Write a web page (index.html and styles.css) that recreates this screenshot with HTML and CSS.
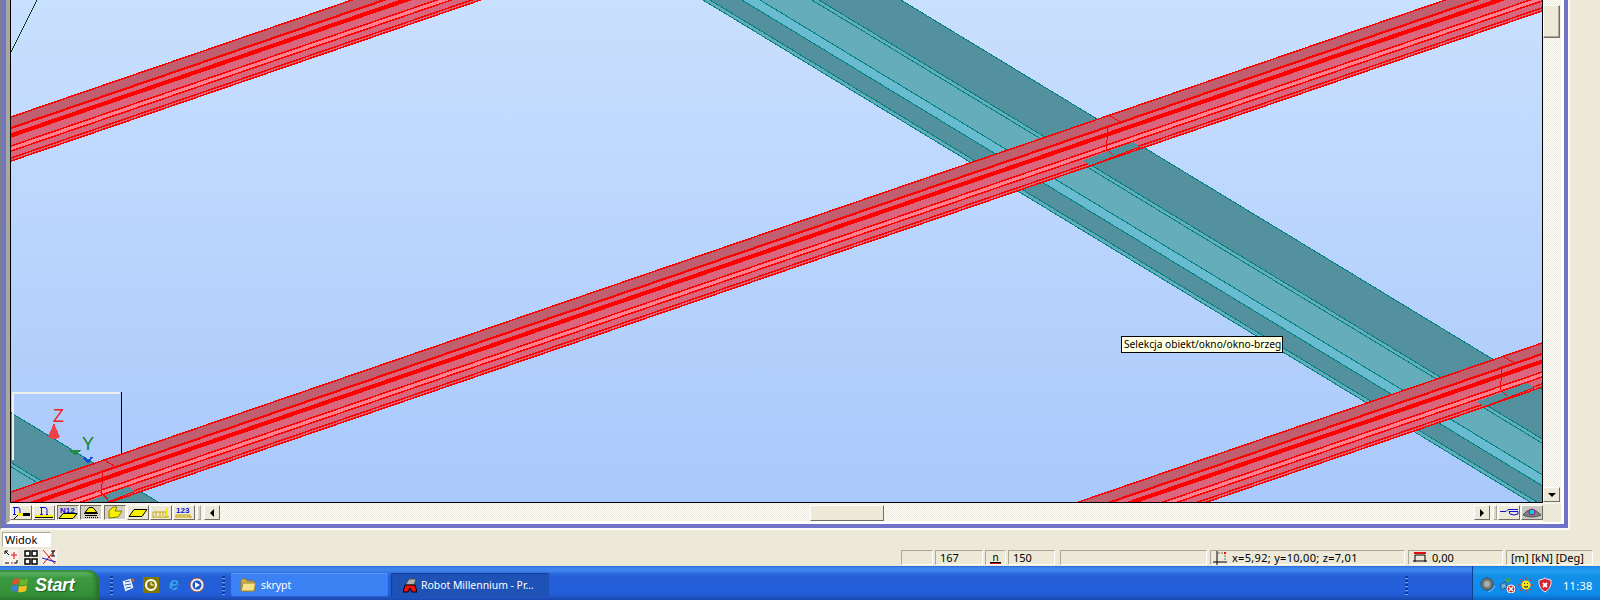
FILE: index.html
```html
<!DOCTYPE html>
<html lang="pl">
<head>
<meta charset="utf-8">
<title>Robot Millennium</title>
<link rel="stylesheet" href="styles.css">
</head>
<body>
<div class="screen">
  <div class="workspace">
    <div class="frame"><div class="mdi"><div class="pane">
      <div class="view-row">
        <div class="viewport">
          <svg class="scene" width="1531" height="502" viewBox="11 0 1531 502">
            <defs>
              <g id="teal">
                <path class="t-mid" d="M-297 -607 L2703 1214 H2710 L-290 -607 Z"/>
                <path class="t-dark" d="M-290 -607 L2710 1214 H2742 L-258 -607 Z"/>
                <path class="t-bright" d="M-258 -607 L2742 1214 H2760 L-240 -607 Z"/>
                <path class="t-mid" d="M-240 -607 L2760 1214 H2819 L-181 -607 Z"/>
                <path class="t-dark" d="M-181 -607 L2819 1214 H2901 L-99 -607 Z"/>
                <path class="t-line" d="M-297 -607 L2703 1214 M-290 -607 L2710 1214 M-258 -607 L2742 1214 M-240 -607 L2760 1214 M-188 -607 L2812 1214 M-181 -607 L2819 1214 M-99 -607 L2901 1214"/>
              </g>
              <g id="beam">
                <path class="b-dark" d="M-2000 686 L2000 -686 V-675 L-2000 697 Z"/>
                <path class="b-mid" d="M-2000 697 L2000 -675 V-657 L-2000 715 Z"/>
                <path class="b-light" d="M-2000 715 L2000 -657 V-652 L-2000 720 Z"/>
                <path class="b-mid" d="M-2000 720 L2000 -652 V-642 L-2000 730 Z"/>
                <path class="b-line" d="M-2000 686 L2000 -686 M-2000 715 L2000 -657 M-2000 720 L2000 -652 M-2000 727 L2000 -645 M-2000 730 L2000 -642"/>
                <path class="b-line2" d="M-2000 697 L2000 -675"/>
                <path class="b-line3" d="M-2000 704.5 L2000 -667.5"/>
              </g>
              <g id="joint">
                <path class="j-wedge" d="M-25 45 L-18 50 L32 31 L25 26 Z"/>
                <path class="j-line" d="M2 0 L12 6 M0 12 L-1 24 L-2 32 L5 39 M-18 50 L32 31"/>
              </g>
            </defs>
            <path class="axis-line" d="M11 52 L37 0"/>
            <use href="#teal" x="0" y="0"/>
            <use href="#teal" x="-1570" y="0"/>
            <path class="box-light" d="M13 460 V392.5 H120"/>
            <path class="box-dark" d="M121 392 V460"/>
            <path class="cone-z" d="M48 437 L54 423 L60 437 Q54 441 48 437 Z"/>
            <path class="cone-y" d="M68 450 H82 L75 455 Z"/>
            <path class="cone-x" d="M84 458 L88 462 L92 457"/>
            <text class="label-z" x="53" y="422">Z</text>
            <text class="label-y" x="82" y="450">Y</text>
            <use href="#beam" x="0" y="120.8"/>
            <use href="#beam" x="0" y="495.8"/>
            <use href="#beam" x="0" y="872"/>
            <use href="#joint" x="103" y="460.5"/>
            <use href="#joint" x="1108" y="115.8"/>
            <use href="#joint" x="1502" y="356.8"/>
          </svg>
          <div class="tooltip">Selekcja obiekt/okno/okno-brzeg</div>
        </div>
        <div class="vscroll">
          <div class="v-thumb"></div>
          <div class="v-down"><span class="arrow-down"></span></div>
        </div>
      </div>
      <div class="hbar">
        <div class="tb"><svg width="20" height="13" viewBox="0 0 20 13"><path class="i-blue" d="M2 1.500 H7 Q9 1.500 9 4 V8 M3.500 1.500 V8 M2 8.500 H5 M8 8.500 H10"/><path class="i-black" d="M7 9 L3 13"/><rect class="i-yellow" x="7" y="7" width="5" height="3"/><rect x="12" y="7" width="7" height="3"/></svg></div>
        <div class="tb"><svg width="20" height="13" viewBox="0 0 20 13"><path class="i-blue" d="M6 1.500 H11 Q13 1.500 13 4 V8 M7.500 1.500 V8 M6 8.500 H9 M12 8.500 H14"/><rect class="i-yellow" x="1" y="9" width="18" height="2"/><path class="i-black" d="M1 11.500 H19"/></svg></div>
        <div class="tb tb-on tb-gap"><svg width="20" height="13" viewBox="0 0 20 13"><text class="i-num" x="2" y="7">N12</text><path class="i-fill" d="M1 12.500 L5 7.500 H19 L15 12.500 Z"/></svg></div>
        <div class="tb tb-on"><svg width="20" height="13" viewBox="0 0 20 13"><path class="i-fill" d="M4 6.500 L8 1.500 H12 L16 6.500 Z"/><path class="i-black" d="M3 7.500 H17 M4 9.500 H16"/><path class="i-dots" d="M4 11.500 H17"/></svg></div>
        <div class="tb tb-on tb-gap"><svg width="20" height="13" viewBox="0 0 20 13"><path class="i-fillb" d="M4 12 V5 L8 1 H12 L10 5 H17 L13 11 L4 12 Z"/></svg></div>
        <div class="tb"><svg width="20" height="13" viewBox="0 0 20 13"><path class="i-fill" d="M1 10.500 L6 3.500 H19 L14 10.500 Z"/></svg></div>
        <div class="tb"><svg width="20" height="13" viewBox="0 0 20 13"><path class="i-frame" d="M2 12 V6 H15 V12 M5 6 V10 M9 6 V10 M12 6 V10 M2 11 H18"/><rect class="i-yellow" x="15" y="2" width="2" height="8"/></svg></div>
        <div class="tb"><svg width="20" height="13" viewBox="0 0 20 13"><text class="i-num" x="2" y="7">123</text><path class="i-frame" d="M2 12 V9 H16 V12 M2 11 H18 M6 9 V11 M10 9 V11 M14 9 V11"/></svg></div>
        <div class="sep"></div>
        <div class="tb tb-arrow"><span class="arrow-left"></span></div>
        <div class="track"><div class="h-thumb"></div></div>
        <div class="tb tb-arrow"><span class="arrow-right"></span></div>
        <div class="sep sep-r"></div>
        <div class="tb"><svg width="20" height="13" viewBox="0 0 20 13"><path class="i-wave" d="M1 5.500 H7 L9 3.500 H19 M10 5.500 H19 V8 Q15 10 11 8 Z"/></svg></div>
        <div class="tb tb-eye"><svg width="20" height="13" viewBox="0 0 20 13"><path class="i-eye" d="M1 9 Q9 -2 19 9 Q10 13 1 9 Z"/><circle class="i-iris" cx="10" cy="6" r="3"/></svg></div>
        <div class="corner"></div>
      </div>
    </div></div></div>
  </div>
  <div class="status">
    <div class="status-left">
      <div class="widok">Widok</div>
      <div class="mini-row">
        <svg class="mini" width="16" height="16" viewBox="0 0 16 16"><path class="i-black" d="M2 2 L6 6 M2 2 H5 M2 2 V5 M2 14 H6 M11 14 H14 M14 11 V14"/><path class="i-red" d="M11 3 V10 M8 6 H14 M8 14 H10"/></svg>
        <svg class="mini mini-b" width="16" height="16" viewBox="0 0 16 16"><path class="i-panes" d="M2 2 H7 V7 H2 Z M9 2 H14 V7 H9 Z M2 10 H7 V15 H2 Z M9 10 H14 V15 H9 Z"/></svg>
        <svg class="mini" width="16" height="16" viewBox="0 0 16 16"><path class="i-red" d="M2 15 L14 1 M2 1 L14 15"/><path class="i-blue" d="M1 9 L15 13"/><path class="i-black" d="M10 2 H14 M12 2 V7 M10 7 H14"/></svg>
      </div>
    </div>
    <div class="fields">
      <div class="field w32"></div>
      <div class="field w48">167</div>
      <div class="field w21 field-c"><span class="n-icon">n</span></div>
      <div class="field w47">150</div>
      <div class="field w147 mg"></div>
      <div class="field w198">
        <svg class="coord" width="16" height="14" viewBox="0 0 16 14"><path class="i-black" d="M4 0 V14 M0 11 H14"/><path class="i-dash" d="M5 2 H12 V10"/><rect class="i-redfill" x="11" y="1" width="2" height="2"/></svg>
        <span class="coord-text">x=5,92; y=10,00; z=7,01</span>
      </div>
      <div class="field w95">
        <svg class="coord" width="14" height="12" viewBox="0 0 14 12"><path class="i-red2" d="M1 1 H13"/><path class="i-black" d="M2 3 H12 M2 3 V10 M12 3 V10 M0 9 H14"/></svg>
        0,00
      </div>
      <div class="field w87">[m] [kN] [Deg]</div>
    </div>
  </div>
  <div class="taskbar">
    <div class="start">
      <svg class="logo" width="18" height="17" viewBox="0 0 18 17">
        <path class="w-red" d="M2 3 Q5 0 8 2 L7 8 Q4 6 1 8 Z"/>
        <path class="w-green" d="M9 2 Q13 4 17 1 L16 7 Q12 9 8 8 Z"/>
        <path class="w-blue" d="M1 9 Q4 7 7 9 L6 15 Q3 13 0 15 Z"/>
        <path class="w-yellow" d="M8 9 Q12 10 16 8 L15 14 Q11 16 7 15 Z"/>
      </svg>
      <span class="start-text">Start</span>
    </div>
    <div class="quick">
      <span class="grip"></span>
      <svg class="q-icon" width="16" height="16" viewBox="0 0 16 16"><path class="q-doc" d="M2 4 L11 1 L14 11 L5 15 Z"/><path class="q-blue" d="M5 5 L10 4 M5 8 L11 7 M6 11 L11 10"/><circle class="q-dot" cx="13" cy="3" r="1.5"/></svg>
      <svg class="q-icon" width="16" height="16" viewBox="0 0 16 16"><rect class="q-olive" width="16" height="16"/><circle class="q-clock" cx="8" cy="8" r="5"/><path class="q-hand" d="M8 5 V8 H11"/></svg>
      <span class="q-ie">e<svg class="q-ring-svg" width="16" height="16" viewBox="0 0 16 16"><path class="q-ring" d="M1 13 Q0 16 6 12 Q14 6 15 2 Q15 0 11 3"/></svg></span>
      <svg class="q-icon" width="16" height="16" viewBox="0 0 16 16"><circle class="q-wmp" cx="8" cy="8" r="7"/><circle class="q-disc" cx="8" cy="8" r="4.5"/><path class="q-play" d="M6 5 L11 8 L6 11 Z"/></svg>
      <span class="grip grip-end"></span>
    </div>
    <div class="task">
      <svg class="t-icon" width="16" height="14" viewBox="0 0 16 14"><path class="folder-back" d="M1 3 V13 H14 V3 H7 L6 1 H2 Z"/><path class="folder-front" d="M1 13 L3 5 H15.500 L14 13 Z"/></svg>
      skrypt
    </div>
    <div class="task task-on">
      <svg class="t-icon" width="14" height="15" viewBox="0 0 14 15"><path class="rb-top" d="M3 6 L6 1 H13 L11 7 H3 Z"/><path class="rb-m" d="M0 14 L2 7 H12 L14 14 H9 L7 10 L5 14 Z"/></svg>
      Robot Millennium - Pr...
    </div>
    <div class="task-space"><span class="grip"></span></div>
    <div class="tray">
      <svg class="tray-icon" width="16" height="16" viewBox="0 0 16 16"><circle class="s-body" cx="7" cy="7" r="6"/><circle class="s-core" cx="7" cy="7" r="3"/><path class="s-wave" d="M8 15 Q13 14 15 9"/></svg>
      <svg class="tray-icon" width="16" height="16" viewBox="0 0 16 16"><circle class="n-head" cx="9" cy="3" r="2.500"/><path class="n-body" d="M1 8 L6 5 L8 10 L3 13 Z"/><circle class="n-x" cx="12" cy="12" r="4"/><path class="n-cross" d="M10 10 L14 14 M14 10 L10 14"/></svg>
      <svg class="tray-icon" width="16" height="16" viewBox="0 0 16 16"><path class="sun-ray" d="M8 0 V16 M0 8 H16 M2 2 L14 14 M14 2 L2 14"/><circle class="sun" cx="8" cy="8" r="4.500"/><path class="sun-face" d="M6 6.500 H6.800 M9.200 6.500 H10 M6 9.500 Q8 11 10 9.500"/></svg>
      <svg class="tray-icon" width="16" height="16" viewBox="0 0 16 16"><path class="sh" d="M8 1 Q11 3 14 3 Q15 11 8 15 Q1 11 2 3 Q5 3 8 1 Z"/><path class="sh-x" d="M6 6 L10 10 M10 6 L6 10"/></svg>
      <span class="clock">11:38</span>
    </div>
  </div>
</div>
</body>
</html>
```

FILE: styles.css
```css
* { box-sizing: border-box; }
html, body { margin: 0; padding: 0; overflow: hidden; }
body { width: 1600px; height: 600px; font-family: "Noto Sans", "Liberation Sans", sans-serif; font-size: 11px; color: #000; background: #ece9d8; }
.screen { width: 1600px; height: 600px; display: flex; flex-direction: column; }

/* window frame */
.workspace { height: 530px; flex: none; }
.frame { width: 1570px; height: 530px; border-left: 1px solid #808080; border-right: 2px solid #fbfaf5; border-bottom: 2px solid #fbfaf5; }
.mdi { height: 100%; border-left: 5px solid #7276c6; border-right: 4px solid #6f74c8; border-bottom: 4px solid #6f74c8; }
.pane { height: 100%; border-left: 4px solid #a8a89c; border-right: 3px solid #fff; border-bottom: 3px solid #fff; display: flex; flex-direction: column; }
.view-row { height: 503px; display: flex; flex: none; }

/* 3D view */
.viewport { position: relative; width: 1533px; height: 503px; flex: none; border: 1px solid #000; border-top: 0; background: linear-gradient(#c9dffe, #a9c9fb); }
.scene { display: block; shape-rendering: crispEdges; }
.axis-line { stroke: #004020; fill: none; }
.t-mid { fill: #65adbb; }
.t-dark { fill: #54919f; }
.t-bright { fill: #69bbcf; }
.t-line { stroke: #008080; fill: none; stroke-width: 1; }
.b-dark { fill: #bf5f6f; }
.b-mid { fill: #d9667c; }
.b-light { fill: #ff8090; }
.b-line { stroke: #ff0000; fill: none; stroke-width: 1.5; }
.b-line2 { stroke: #ff0000; fill: none; stroke-width: 2.2; }
.b-line3 { stroke: #ff0000; fill: none; stroke-width: 4.2; }
.j-wedge { fill: #54919f; }
.j-line { stroke: #ff0000; fill: none; }
.box-light { stroke: #eeeeee; stroke-width: 2; fill: none; }
.box-dark { stroke: #000; fill: none; }
.cone-z { fill: #f04048; }
.cone-y { fill: #208a40; }
.cone-x { stroke: #2040e0; stroke-width: 2; fill: none; }
.label-z, .label-y { font-family: "Liberation Sans", sans-serif; font-size: 18px; shape-rendering: auto; }
.label-z { fill: #f02020; }
.label-y { fill: #108030; }
.tooltip { position: absolute; left: 1110px; top: 336px; width: 162px; height: 17px; border: 1px solid #000; background: #ffffe1; font-size: 10.2px; line-height: 15px; padding-left: 2px; white-space: nowrap; }

/* scrollbars */
.vscroll, .hbar { background-color: #f6f4ec; background-image: repeating-conic-gradient(#ece9d8 0 25%, #ffffff 0 50%); background-size: 2px 2px; }
.vscroll { width: 18px; flex: none; display: flex; flex-direction: column; justify-content: space-between; padding: 5px 1px 1px 0; }
.v-thumb { width: 17px; height: 33px; background: #ece9d8; border: 1px solid; border-color: #fff #716f64 #716f64 #fff; box-shadow: inset -1px -1px 0 #aca899; }
.v-down { width: 17px; height: 15px; background: #ece9d8; border: 1px solid; border-color: #fff #716f64 #716f64 #fff; display: flex; align-items: center; justify-content: center; }
.arrow-down { width: 0; height: 0; border: 4px solid transparent; border-top: 4px solid #000; border-bottom: 0; }
.arrow-left { width: 0; height: 0; border: 4px solid transparent; border-right: 4px solid #000; border-left: 0; }
.arrow-right { width: 0; height: 0; border: 4px solid transparent; border-left: 4px solid #000; border-right: 0; }
.hbar { height: 18px; flex: none; display: flex; align-items: center; padding-top: 1px; }
.tb { width: 22px; height: 15px; margin-right: 1px; flex: none; background: #ece9d8; border: 1px solid; border-color: #fff #716f64 #716f64 #fff; display: flex; align-items: center; justify-content: center; }
.tb svg { display: block; }
.tb-on { background: #d4d0c4; border-color: #716f64 #fff #fff #716f64; }
.tb-eye { background: #c8c8c0; }
.tb-gap { margin-left: 1px; }
.tb-arrow { width: 16px; margin-right: 0; }
.sep { width: 4px; height: 15px; margin: 0 3px 0 1px; flex: none; background: #d8d5c8; border: 1px solid; border-color: #fff #aca899 #aca899 #fff; }
.sep-r { margin: 0 1px 0 3px; }
.track { flex: 1; height: 17px; padding-left: 590px; display: flex; align-items: center; }
.h-thumb { width: 74px; height: 16px; background: #ece9d8; border: 1px solid; border-color: #fff #716f64 #716f64 #fff; }
.corner { width: 18px; height: 18px; margin-left: -1px; background: #ece9d8; flex: none; }

/* toolbar and status icons */
svg path { fill: none; }
.i-blue { stroke: #1010e0; fill: none; }
.i-black { stroke: #000; fill: none; }
.i-red { stroke: #e01010; fill: none; }
.i-red2 { stroke: #e01010; stroke-width: 2; fill: none; }
.i-yellow { fill: #f8f000; stroke: none; }
.i-fill { fill: #f8f000; stroke: #000; }
.i-fillb { fill: #f8f000; stroke: #808000; }
.i-num { font-family: "Liberation Sans", sans-serif; font-size: 8px; font-weight: bold; fill: #1010e0; }
.i-dots { stroke: #000; stroke-dasharray: 1 1; fill: none; }
.i-frame { stroke: #c8a800; fill: none; }
.i-wave { stroke: #1010d0; fill: none; }
.i-eye { fill: #808080; stroke: #505050; }
.i-iris { fill: #10c8e0; stroke: #a01080; }
.i-panes { stroke: #000; stroke-width: 1.500; fill: #ffffff; }
.i-dash { stroke: #707070; stroke-dasharray: 2 1; fill: none; }
.i-redfill { fill: #ff0000; }

/* status */
.status { height: 36px; flex: none; display: flex; justify-content: space-between; padding: 2px 7px 1px 3px; background: #ece9d8; }
.status-left { display: flex; flex-direction: column; width: 56px; }
.widok { width: 49px; height: 15px; margin-left: -1px; background: #fff; border: 1px solid; border-color: #aca899 #fff #fff #aca899; line-height: 13px; padding-left: 2px; font-size: 11px; }
.mini-row { display: flex; margin-top: 2px; height: 16px; gap: 3px; }
.mini { display: block; background: #f4f2ea; flex: none; }
.mini-b { margin-left: 1px; margin-right: -1px; }
.fields { display: flex; align-items: flex-end; gap: 2px; }
.field { height: 15px; flex: none; display: flex; align-items: center; padding-left: 4px; gap: 5px; border: 1px solid; border-color: #aca899 #fff #fff #aca899; font-size: 11px; white-space: nowrap; }
.w32 { width: 32px; }
.w48 { width: 48px; }
.w21 { width: 21px; }
.w47 { width: 47px; }
.w147 { width: 147px; }
.w198 { width: 195px; margin-left: 1px; gap: 3px; padding-left: 2px; }
.w95 { width: 95px; margin-left: 1px; }
.w87 { width: 87px; margin-left: 1px; }
.mg { margin-left: 3px; }
.coord-text { letter-spacing: 0.3px; }
.field-c { justify-content: center; padding: 0; }
.n-icon { border-bottom: 1px solid #000; box-shadow: 0 1px 0 #d01010; line-height: 9px; padding: 0 2px; font-size: 10px; }
.coord { display: block; flex: none; }

/* taskbar */
.taskbar { height: 34px; flex: none; display: flex; color: #fff; background: linear-gradient(#2a68d8 0, #3f86ec 2px, #3d82ea 5px, #2a66dc 8px, #235ed6 12px, #245fdc 26px, #2158cf 30px, #1a48ad 34px); }
.start { width: 99px; height: 30px; margin-top: 4px; flex: none; display: flex; align-items: center; padding-left: 11px; gap: 6px; border-radius: 0 11px 0 0; background: linear-gradient(#3f9a45 0, #5cb262 3px, #3b9a40 8px, #349038 24px, #2d7f30 30px); box-shadow: inset -3px 0 4px #2a6e2c; }
.logo { display: block; flex: none; }
.w-red { fill: #e8502a; }
.w-green { fill: #6ab52e; }
.w-blue { fill: #3a80d8; }
.w-yellow { fill: #f0c020; }
.start-text { font-family: "Liberation Sans", sans-serif; font-style: italic; font-weight: bold; font-size: 18px; letter-spacing: -0.3px; text-shadow: 1px 1px 1px #1c5a20; }
.quick { display: flex; align-items: center; gap: 7px; padding: 4px 0 0 11px; width: 132px; flex: none; }
.grip { display: block; width: 3px; height: 19px; flex: none; background: repeating-linear-gradient(#0d3aa0 0 2px, #6fa0f0 2px 3px, transparent 3px 4px); }
.grip-end { margin-left: 10px; }
.q-icon { display: block; flex: none; }
.q-doc { fill: #e8f0ff; stroke: #2060c0; }
.q-blue { stroke: #2060c0; }
.q-dot { fill: #e06020; }
.q-olive { fill: #807800; }
.q-clock { fill: none; stroke: #fff; stroke-width: 2; }
.q-hand { stroke: #fff; }
.q-ie { position: relative; display: block; flex: none; width: 16px; height: 18px; text-align: center; font-family: "Liberation Sans", sans-serif; font-size: 18px; line-height: 17px; font-weight: bold; font-style: italic; color: #3aa0e8; }
.q-ring-svg { position: absolute; left: 0; top: 1px; display: block; }
.q-ring { stroke: #1860c0; fill: none; }
.q-wmp { fill: #e8eef8; stroke: #a05030; }
.q-disc { fill: #2050c0; }
.q-play { fill: #fff; }
.task { height: 24px; margin-top: 7px; flex: none; width: 157px; display: flex; align-items: center; gap: 5px; padding-left: 9px; font-size: 10.4px; border-radius: 2px; background: #3c81f3; box-shadow: inset 0 1px 0 #5a98f5, inset 0 -1px 0 #2a60d0; }
.task-on { width: 158px; margin-left: 3px; padding-left: 12px; background: #1e52b7; box-shadow: inset 1px 1px 1px #133e90; gap: 4px; }
.t-icon { display: block; flex: none; }
.folder-back { fill: #d8b048; stroke: #9a7a20; }
.folder-front { fill: #f8e088; stroke: #a08830; }
.rb-top { fill: #b0b0b0; stroke: #505050; }
.rb-m { fill: #f01010; stroke: #000; }
.task-space { flex: 1; display: flex; align-items: center; justify-content: flex-end; padding: 5px 64px 0 0; }
.tray { width: 128px; flex: none; display: flex; align-items: center; padding: 4px 0 0 8px; gap: 3px; background: linear-gradient(#1a88e8 0, #26a0f0 5px, #1290e8 10px, #0f8ceb 28px, #0a66c8 34px); box-shadow: inset 1px 0 0 #0c3f90; }
.tray-icon { display: block; flex: none; }
.s-body { fill: #707878; stroke: #404848; }
.s-core { fill: #a8b0b0; }
.s-wave { stroke: #90b8f0; }
.n-head { fill: #40a060; }
.n-body { fill: #60b0d8; stroke: #305080; }
.n-x { fill: #d02020; stroke: #fff; }
.n-cross { stroke: #fff; stroke-width: 1.500; }
.sun-ray { stroke: #f03010; }
.sun { fill: #f8e818; }
.sun-face { stroke: #000; }
.sh { fill: #d82030; stroke: #e8e8f0; }
.sh-x { stroke: #fff; stroke-width: 2; }
.clock { margin-left: 7px; font-size: 11px; letter-spacing: 0.3px; }
```
